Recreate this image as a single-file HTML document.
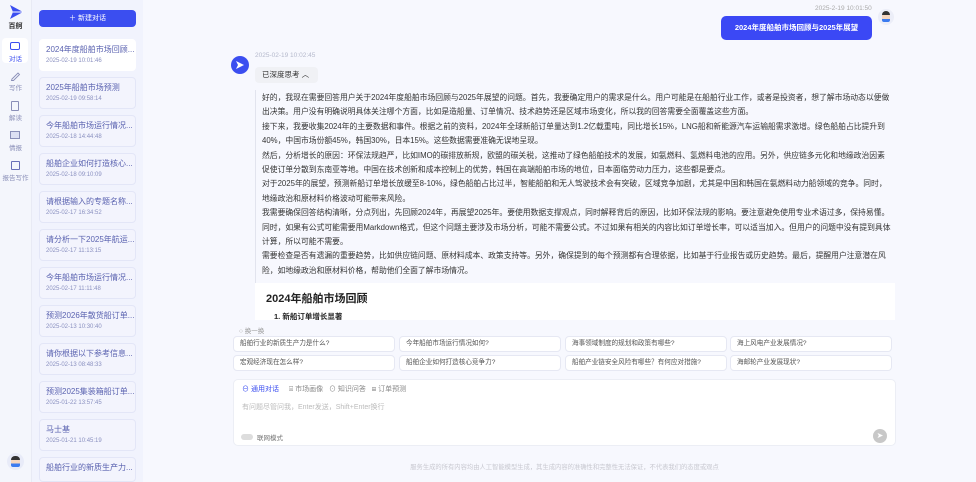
<!DOCTYPE html>
<html><head><meta charset="utf-8"><style>
*{margin:0;padding:0;box-sizing:border-box}
body{width:976px;height:482px;overflow:hidden;background:#f7f8fe;font-family:"Liberation Sans","Noto Sans CJK SC",sans-serif;position:relative;color:#333}
.a{position:absolute}
.rail{left:0;top:0;width:31px;height:482px;background:#f4f6fc}
.list{left:31px;top:0;width:112px;height:482px;background:#f1f3fd;border-left:1px solid #e8eaf5}
.nav{left:0;width:31px;text-align:center;font-size:6.5px;color:#8a8fb8}
.card{left:39px;width:97px;height:32px;border:1px solid #e3e6f7;border-radius:4px;background:#f3f4fd;padding:4px 0 0 6px}
.card .t{font-size:8px;color:#5a62b0;white-space:nowrap;overflow:hidden}
.card .d{font-size:6px;color:#8a90c0;margin-top:3px}
.txt div{white-space:nowrap;font-size:7.8px;height:14.4px;line-height:14.4px;color:#333}
.chip{height:16px;background:#fff;border:1px solid #e6e8f3;border-radius:4px;font-size:6.6px;color:#555;padding-left:6px;line-height:14px;width:162px}
</style></head><body>
<div class="a rail"></div>
<div class="a list"></div>
<svg class="a" style="left:7px;top:3px" width="18" height="18" viewBox="0 0 18 18"><path d="M3 2 L16 9 L3 16 L6 9Z" fill="#3b4ef0"/><path d="M6 9 L16 9" stroke="#fff" stroke-width="1"/></svg>
<div class="a nav" style="top:21px;font-size:7px;color:#333;font-weight:bold">百舸</div>
<div class="a" style="left:2px;top:38px;width:26px;height:25px;background:#fff;border-radius:4px"></div>
<div class="a" style="left:10px;top:42px;width:10px;height:8px;border:1.3px solid #3b4ef0;border-radius:2px"></div>
<div class="a nav" style="top:53px;color:#3b4ef0">对话</div>
<svg class="a" style="left:10px;top:71px" width="11" height="10" viewBox="0 0 11 10"><path d="M2 8 L8 2 L9.5 3.5 L3.5 9.5 L1.5 9.5Z" fill="none" stroke="#8a8fb8" stroke-width="0.9"/></svg>
<div class="a nav" style="top:82px">写作</div>
<div class="a" style="left:11px;top:101px;width:8px;height:10px;border:1px solid #8a8fb8;border-radius:1px"></div>
<div class="a nav" style="top:112px">解读</div>
<div class="a" style="left:10px;top:131px;width:10px;height:8px;border:1px solid #8a8fb8;background:#dde0f3"></div>
<div class="a nav" style="top:142px">情报</div>
<div class="a" style="left:11px;top:161px;width:9px;height:9px;border:1.2px solid #6870b8;border-radius:1px"></div>
<div class="a nav" style="top:172px">报告写作</div>
<div class="a" style="left:7px;top:453px;width:17px;height:17px;border-radius:50%;background:#e8ebf8"></div>
<div class="a" style="left:11px;top:456px;width:9px;height:11px;border-radius:4px 4px 2px 2px;background:linear-gradient(#333 35%,#f5d6c0 35%,#f5d6c0 70%,#3b7bf0 70%)"></div>

<div class="a" style="left:39px;top:10px;width:97px;height:17px;background:#3b4ef0;border-radius:4px;color:#fff;font-size:7px;text-align:center;line-height:17px">＋ 新建对话</div>
<div class="a card" style="top:39px;background:#fff;border-color:#fff"><div class="t">2024年度船舶市场回顾...</div><div class="d">2025-02-19 10:01:46</div></div>
<div class="a card" style="top:77px"><div class="t">2025年船舶市场预测</div><div class="d">2025-02-19 09:58:14</div></div>
<div class="a card" style="top:115px"><div class="t">今年船舶市场运行情况...</div><div class="d">2025-02-18 14:44:48</div></div>
<div class="a card" style="top:153px"><div class="t">船舶企业如何打造核心...</div><div class="d">2025-02-18 09:10:09</div></div>
<div class="a card" style="top:191px"><div class="t">请根据输入的专题名称...</div><div class="d">2025-02-17 16:34:52</div></div>
<div class="a card" style="top:229px"><div class="t">请分析一下2025年航运...</div><div class="d">2025-02-17 11:13:15</div></div>
<div class="a card" style="top:267px"><div class="t">今年船舶市场运行情况...</div><div class="d">2025-02-17 11:11:48</div></div>
<div class="a card" style="top:305px"><div class="t">预测2026年散货船订单...</div><div class="d">2025-02-13 10:30:40</div></div>
<div class="a card" style="top:343px"><div class="t">请你根据以下参考信息...</div><div class="d">2025-02-13 08:48:33</div></div>
<div class="a card" style="top:381px"><div class="t">预测2025集装箱船订单...</div><div class="d">2025-01-22 13:57:45</div></div>
<div class="a card" style="top:419px"><div class="t">马士基</div><div class="d">2025-01-21 10:45:19</div></div>
<div class="a card" style="top:457px;height:25px"><div class="t">船舶行业的新质生产力...</div></div>

<div class="a" style="left:815px;top:5px;font-size:6.5px;color:#aaa">2025-2-19 10:01:50</div>
<div class="a" style="left:721px;top:16px;width:151px;height:24px;background:#3b48f5;border-radius:5px;color:#fff;font-size:7.5px;text-align:center;line-height:24px;font-weight:bold">2024年度船舶市场回顾与2025年展望</div>
<div class="a" style="left:878px;top:9px;width:16px;height:16px;border-radius:50%;background:#eceef8"></div>
<div class="a" style="left:882px;top:11px;width:8px;height:11px;border-radius:4px 4px 2px 2px;background:linear-gradient(#333 35%,#f5d6c0 35%,#f5d6c0 72%,#3b7bf0 72%)"></div>

<div class="a" style="left:231px;top:56px;width:18px;height:18px;border-radius:50%;background:#3b4ef0"></div>
<svg class="a" style="left:235px;top:60px" width="10" height="10" viewBox="0 0 10 10"><path d="M1 1 L9 5 L1 9 L3 5Z" fill="#fff"/></svg>
<div class="a" style="left:255px;top:52px;font-size:6.5px;color:#b5b9cc">2025-02-19 10:02:45</div>
<div class="a" style="left:255px;top:67px;width:63px;height:16px;background:#f0f1f5;border-radius:4px;font-size:7.5px;line-height:16px;padding-left:7px;color:#333">已深度思考 ︿</div>
<div class="a" style="left:255px;top:90px;width:1px;height:195px;background:#e2e4ee"></div>
<div class="a txt" style="left:262px;top:91px">
<div>好的，我现在需要回答用户关于2024年度船舶市场回顾与2025年展望的问题。首先，我要确定用户的需求是什么。用户可能是在船舶行业工作，或者是投资者，想了解市场动态以便做</div>
<div>出决策。用户没有明确说明具体关注哪个方面，比如是造船量、订单情况、技术趋势还是区域市场变化，所以我的回答需要全面覆盖这些方面。</div>
<div>接下来，我要收集2024年的主要数据和事件。根据之前的资料，2024年全球新船订单量达到1.2亿载重吨，同比增长15%，LNG船和新能源汽车运输船需求激增。绿色船舶占比提升到</div>
<div>40%，中国市场份额45%，韩国30%，日本15%。这些数据需要准确无误地呈现。</div>
<div>然后，分析增长的原因：环保法规趋严，比如IMO的碳排放新规，欧盟的碳关税，这推动了绿色船舶技术的发展，如氨燃料、氢燃料电池的应用。另外，供应链多元化和地缘政治因素</div>
<div>促使订单分散到东南亚等地。中国在技术创新和成本控制上的优势，韩国在高端船舶市场的地位，日本面临劳动力压力，这些都是要点。</div>
<div>对于2025年的展望，预测新船订单增长放缓至8-10%，绿色船舶占比过半，智能船舶和无人驾驶技术会有突破，区域竞争加剧，尤其是中国和韩国在氨燃料动力船领域的竞争。同时，</div>
<div>地缘政治和原材料价格波动可能带来风险。</div>
<div>我需要确保回答结构清晰，分点列出，先回顾2024年，再展望2025年。要使用数据支撑观点，同时解释背后的原因，比如环保法规的影响。要注意避免使用专业术语过多，保持易懂。</div>
<div>同时，如果有公式可能需要用Markdown格式，但这个问题主要涉及市场分析，可能不需要公式。不过如果有相关的内容比如订单增长率，可以适当加入。但用户的问题中没有提到具体</div>
<div>计算，所以可能不需要。</div>
<div>需要检查是否有遗漏的重要趋势，比如供应链问题、原材料成本、政策支持等。另外，确保提到的每个预测都有合理依据，比如基于行业报告或历史趋势。最后，提醒用户注意潜在风</div>
<div>险，如地缘政治和原材料价格，帮助他们全面了解市场情况。</div>
</div>
<div class="a" style="left:255px;top:283px;width:640px;height:37px;background:#fff;overflow:hidden">
<div style="position:absolute;left:11px;top:7px;font-size:11px;font-weight:bold;color:#222">2024年船舶市场回顾</div>
<div style="position:absolute;left:19px;top:28px;font-size:7.5px;font-weight:bold;color:#222">1. 新船订单增长显著</div>
</div>
<div class="a" style="left:239px;top:325px;font-size:6.5px;color:#999">○ 换一换</div>
<div class="a chip" style="left:233px;top:336px">船舶行业的新质生产力是什么?</div>
<div class="a chip" style="left:399px;top:336px">今年船舶市场运行情况如何?</div>
<div class="a chip" style="left:565px;top:336px">海事领域制度的规划和政策有哪些?</div>
<div class="a chip" style="left:730px;top:336px">海上风电产业发展情况?</div>
<div class="a chip" style="left:233px;top:355px">宏观经济现在怎么样?</div>
<div class="a chip" style="left:399px;top:355px">船舶企业如何打造核心竞争力?</div>
<div class="a chip" style="left:565px;top:355px">船舶产业链安全风险有哪些？有何应对措施?</div>
<div class="a chip" style="left:730px;top:355px">海邮轮产业发展现状?</div>
<div class="a" style="left:233px;top:379px;width:663px;height:67px;background:#fff;border:1px solid #eceef5;border-radius:5px"></div>
<div class="a" style="left:242px;top:384px;font-size:7px;color:#3b4ef0">⊖ 通用对话</div>
<div class="a" style="left:289px;top:384px;font-size:7px;color:#888">⌸ 市场画像 &nbsp;&nbsp;⊙ 知识问答 &nbsp;&nbsp;⊞ 订单预测</div>
<div class="a" style="left:242px;top:402px;font-size:7px;color:#bbb">有问题尽管问我，Enter发送，Shift+Enter换行</div>
<div class="a" style="left:241px;top:434px;width:12px;height:6px;border-radius:3px;background:#ddd"></div>
<div class="a" style="left:257px;top:432px;font-size:6.5px;color:#777">联网模式</div>
<div class="a" style="left:873px;top:429px;width:14px;height:14px;border-radius:50%;background:#c8c8c8;color:#fff;font-size:8px;text-align:center;line-height:14px">➤</div>
<div class="a" style="left:233px;top:462px;width:663px;text-align:center;font-size:6.3px;color:#c8c8d0">服务生成的所有内容均由人工智能模型生成，其生成内容的准确性和完整性无法保证，不代表我们的态度或观点</div>
</body></html>
